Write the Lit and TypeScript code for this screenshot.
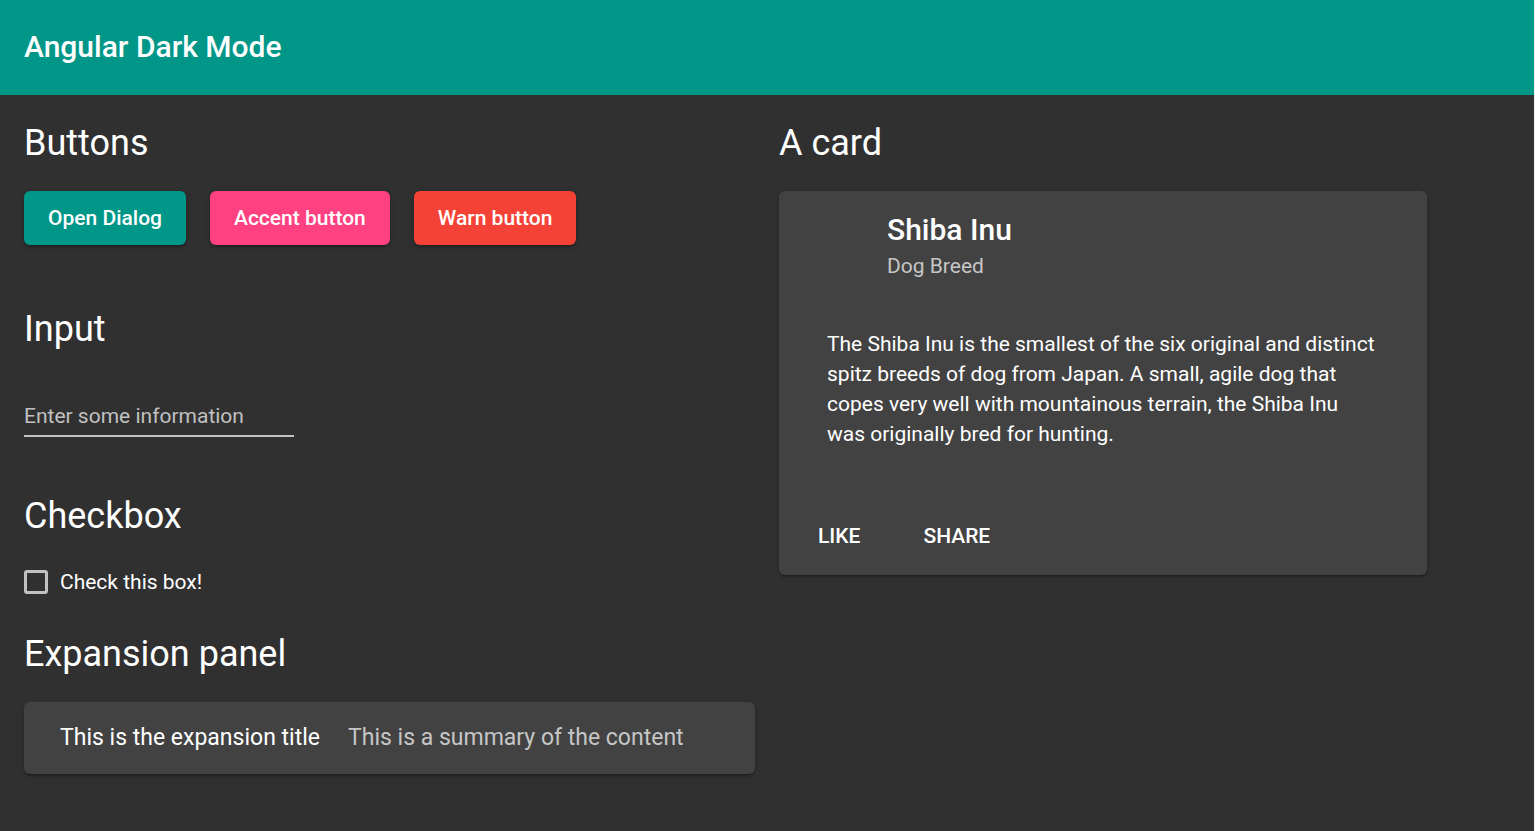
import { LitElement, html, css } from "lit";
import { customElement, state } from "lit/decorators.js";

@customElement("app-root")
export class AppRoot extends LitElement {
  static styles = css`
    :host {
      display: block;
      box-sizing: border-box;
      min-height: 100vh;
      border-right: 1px solid #f0f0f0;
      background: #303030;
      color: #fff;
      font-family: Roboto, sans-serif;
      font-size: 21px;
      line-height: 30px;
    }
    * {
      box-sizing: border-box;
    }
    h1, h2, h3, p {
      margin: 0;
    }
    button, input {
      font: inherit;
      color: inherit;
    }
    .toolbar {
      padding: 23px 24px 24px;
      background: #009688;
    }
    .toolbar h1 {
      font-size: 30px;
      font-weight: 500;
      line-height: 48px;
    }
    .content {
      display: grid;
      grid-template-columns: 1fr 1fr;
      gap: 24px;
      padding: 24px;
    }
    h2 {
      margin-bottom: 24px;
      font-size: 36px;
      font-weight: 400;
      line-height: 48px;
    }
    .buttons {
      display: flex;
      gap: 24px;
      margin-bottom: 60px;
    }
    .raised {
      height: 54px;
      padding: 0 24px;
      border: 0;
      border-radius: 6px;
      font-weight: 500;
      white-space: nowrap;
      box-shadow: 0 3px 3px -2px rgba(0, 0, 0, 0.2), 0 2px 3px rgba(0, 0, 0, 0.14), 0 1px 6px rgba(0, 0, 0, 0.12);
    }
    .primary {
      background: #009688;
    }
    .accent {
      background: #ff4081;
    }
    .warn {
      background: #f44336;
    }
    .field {
      display: block;
      width: 270px;
      height: 60px;
      margin-bottom: 55px;
      padding: 24px 0 4px;
      border: 0;
      border-bottom: 2px solid #c1c1c1;
      border-radius: 0;
      background: none;
      outline: none;
    }
    .field::placeholder {
      color: #c1c1c1;
      opacity: 1;
    }
    .check {
      display: flex;
      align-items: center;
      gap: 12px;
      width: max-content;
      height: 36px;
      margin-bottom: 30px;
    }
    .check input {
      appearance: none;
      width: 24px;
      height: 24px;
      margin: 0;
      border: 3px solid #c1c1c1;
      border-radius: 3px;
    }
    .check input:checked {
      background: #ff4081;
      border-color: #ff4081;
    }
    .surface {
      background: #424242;
      border-radius: 6px;
      box-shadow: 0 3px 2px -2px rgba(0, 0, 0, 0.2), 0 2px 2px rgba(0, 0, 0, 0.14), 0 2px 5px rgba(0, 0, 0, 0.12);
    }
    .expansion {
      display: flex;
      align-items: center;
      gap: 28px;
      width: 100%;
      height: 72px;
      padding: 0 36px;
      border: 0;
      background: none;
      font-size: 23px;
      text-align: left;
    }
    .muted {
      color: #c6c6c6;
    }
    .details {
      padding: 0 36px 24px;
    }
    .card {
      max-width: 648px;
      padding: 24px 24px 12px;
    }
    .heading {
      padding-left: 84px;
      margin-bottom: 48px;
    }
    .heading h3 {
      font-size: 30px;
      font-weight: 500;
      line-height: 30px;
    }
    .heading p {
      margin-top: 6px;
    }
    .text {
      padding: 0 24px;
      margin-bottom: 60px;
    }
    .actions {
      display: flex;
      gap: 15px;
      margin-left: -9px;
    }
    .flat {
      height: 54px;
      padding: 0 24px;
      border: 0;
      background: none;
      font-weight: 500;
    }
  `;

  @state() private open = false;

  render() {
    return html`
      <header class="toolbar"><h1>Angular Dark Mode</h1></header>
      <main class="content">
        <div>
          <h2>Buttons</h2>
          <div class="buttons">
            <button class="raised primary">Open Dialog</button>
            <button class="raised accent">Accent button</button>
            <button class="raised warn">Warn button</button>
          </div>
          <h2>Input</h2>
          <input class="field" type="text" placeholder="Enter some information" aria-label="Enter some information" />
          <h2>Checkbox</h2>
          <label class="check"><input type="checkbox" /><span>Check this box!</span></label>
          <h2>Expansion panel</h2>
          <section class="surface">
            <button class="expansion" aria-expanded=${this.open} @click=${() => (this.open = !this.open)}>
              <span>This is the expansion title</span>
              <span class="muted">This is a summary of the content</span>
            </button>
            ${this.open ? html`<p class="details">This is the content</p>` : ""}
          </section>
        </div>
        <div>
          <h2>A card</h2>
          <article class="surface card">
            <header class="heading">
              <h3>Shiba Inu</h3>
              <p class="muted">Dog Breed</p>
            </header>
            <p class="text">
              The Shiba Inu is the smallest of the six original and distinct spitz breeds of dog from Japan. A small,
              agile dog that copes very well with mountainous terrain, the Shiba Inu was originally bred for hunting.
            </p>
            <div class="actions">
              <button class="flat">LIKE</button>
              <button class="flat">SHARE</button>
            </div>
          </article>
        </div>
      </main>
    `;
  }
}
